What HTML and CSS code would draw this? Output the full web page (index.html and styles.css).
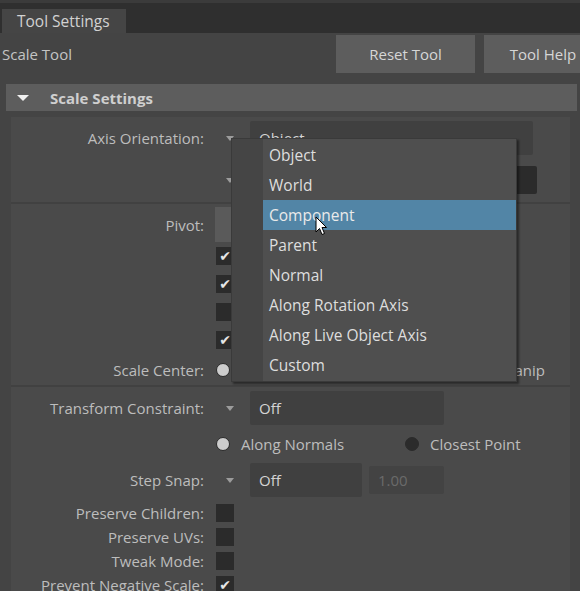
FILE: index.html
```html
<!DOCTYPE html>
<html>
<head>
	<meta charset="UTF-8">
	<title>Tool Settings</title>
	<link rel="stylesheet" href="styles.css">
</head>
<body>
	<div class="tabbar">
		<div class="tab">Tool Settings</div>
	</div>

	<div class="toolbar">
		<span class="tool-name">Scale Tool</span>
		<button class="tool-button">Reset Tool</button>
		<button class="tool-button help-button">Tool Help</button>
	</div>

	<div class="section-head"><span class="head-arrow"></span>Scale Settings</div>

	<div class="section-body">
		<div class="row axis-row">
			<span class="label">Axis Orientation:</span>
			<span class="tri"></span>
			<div class="field axis-field">Object</div>
		</div>
		<div class="row axis-row2">
			<span class="label"></span>
			<span class="tri"></span>
			<div class="field dark-field"></div>
		</div>

		<div class="separator"></div>

		<div class="row pivot-row">
			<span class="label">Pivot:</span>
			<div class="pivot-button"></div>
		</div>
		<div class="row check-row">
			<span class="label"></span>
			<span class="checkbox checked">&#10004;</span>
		</div>
		<div class="row check-row">
			<span class="label"></span>
			<span class="checkbox checked">&#10004;</span>
		</div>
		<div class="row check-row">
			<span class="label"></span>
			<span class="checkbox"></span>
		</div>
		<div class="row check-row">
			<span class="label"></span>
			<span class="checkbox checked">&#10004;</span>
		</div>
		<div class="row center-row">
			<span class="label">Scale Center:</span>
			<span class="radio"></span>
			<span class="radio-text manip">Manip</span>
		</div>

		<div class="separator"></div>

		<div class="row constraint-row">
			<span class="label">Transform Constraint:</span>
			<span class="tri"></span>
			<div class="field off-field">Off</div>
		</div>
		<div class="row radio-row">
			<span class="label"></span>
			<span class="radio"></span>
			<span class="radio-text normals">Along Normals</span>
			<span class="radio dark"></span>
			<span class="radio-text">Closest Point</span>
		</div>
		<div class="row snap-row">
			<span class="label">Step Snap:</span>
			<span class="tri"></span>
			<div class="field snap-field">Off</div>
			<div class="field num-field">1.00</div>
		</div>
		<div class="row small-row first-small">
			<span class="label">Preserve Children:</span>
			<span class="checkbox"></span>
		</div>
		<div class="row small-row">
			<span class="label">Preserve UVs:</span>
			<span class="checkbox"></span>
		</div>
		<div class="row small-row">
			<span class="label">Tweak Mode:</span>
			<span class="checkbox"></span>
		</div>
		<div class="row small-row">
			<span class="label">Prevent Negative Scale:</span>
			<span class="checkbox checked">&#10004;</span>
		</div>
	</div>

	<!-- open option menu for axis orientation -->
	<div class="menu">
		<div class="menu-gutter"></div>
		<ul class="menu-list">
			<li>Object</li>
			<li>World</li>
			<li class="active">Component</li>
			<li>Parent</li>
			<li>Normal</li>
			<li>Along Rotation Axis</li>
			<li>Along Live Object Axis</li>
			<li>Custom</li>
		</ul>
	</div>

	<svg class="cursor" width="13" height="20" viewBox="0 0 13 20">
		<path d="M1 1 L1 16 L4.5 12.5 L7 18.5 L9.5 17.5 L7 11.5 L11.5 11.5 Z" fill="#ffffff" stroke="#000000" stroke-width="1"/>
	</svg>
</body>
</html>
```

FILE: styles.css
```css
body {
	margin: 0;
	width: 580px;
	height: 591px;
	overflow: hidden;
	background-color: #444444;
	font-family: "Open Sans", "Noto Sans", sans-serif;
	font-size: 15px;
	color: #bdbdbd;
	position: relative;
}

.tabbar {
	height: 30px;
	border-top: 3px solid #3b3b3b;
	background-color: #2f2f2f;
	display: flex;
	align-items: flex-end;
}

.tab {
	margin-left: 2px;
	width: 109px;
	height: 24px;
	padding-left: 15px;
	background-color: #454545;
	color: #d2d2d2;
	line-height: 24px;
	font-size: 15.5px;
}

.toolbar {
	height: 47px;
	display: flex;
	align-items: flex-start;
}

.tool-name {
	margin-left: 2px;
	margin-top: 11px;
	color: #c4c4c4;
	flex: 1;
}

.tool-button {
	margin-top: 2px;
	width: 139px;
	height: 38px;
	border: none;
	background-color: #5d5d5d;
	color: #d6d6d6;
	font-family: "Open Sans", "Noto Sans", sans-serif;
	font-size: 15px;
	padding: 0;
	flex: none;
}

.help-button {
	margin-left: 9px;
	width: 118px;
	margin-right: -22px;
}

.section-head {
	margin: 4px 3px 0 6px;
	height: 27px;
	background-color: #5d5d5d;
	display: flex;
	align-items: center;
	font-weight: bold;
	color: #cfcfcf;
}

.head-arrow {
	width: 0;
	height: 0;
	margin-left: 11px;
	margin-right: 21px;
	border-left: 6px solid transparent;
	border-right: 6px solid transparent;
	border-top: 6px solid #f0f0f0;
}

.section-body {
	margin: 6px 10px 0 11px;
	height: 480px;
	background-color: #4a4a4a;
	padding-top: 4px;
}

.row {
	display: flex;
	align-items: center;
}

.label {
	width: 193px;
	flex: none;
	text-align: right;
	white-space: nowrap;
}

.tri {
	width: 0;
	height: 0;
	margin-left: 22px;
	margin-right: 16px;
	border-left: 4px solid transparent;
	border-right: 4px solid transparent;
	border-top: 5px solid #9c9c9c;
}

.field {
	height: 100%;
	box-sizing: border-box;
	padding-left: 9px;
	display: flex;
	align-items: center;
	background-color: #404040;
	border-radius: 2px;
	color: #d4d4d4;
}

.axis-row {
	height: 34px;
}

.axis-field {
	width: 283px;
}

.axis-row2 {
	height: 28px;
	margin-top: 11px;
}

.dark-field {
	width: 287px;
	background-color: #2b2b2b;
}

.separator {
	height: 2px;
	background-color: #414141;
}

.axis-row2 + .separator {
	margin-top: 8px;
}

.pivot-row {
	height: 35px;
	margin-top: 3px;
}

.pivot-button {
	margin-left: 11px;
	width: 280px;
	height: 35px;
	background-color: #5a5a5a;
}

.check-row {
	height: 28px;
}

.checkbox {
	margin-left: 12px;
	width: 18px;
	height: 18px;
	background-color: #2b2b2b;
	color: #e6e6e6;
	font-size: 14px;
	line-height: 18px;
	text-align: center;
	font-family: "DejaVu Sans", sans-serif;
}

.center-row {
	height: 31px;
}

.radio {
	margin-left: 12px;
	width: 12px;
	height: 12px;
	border-radius: 50%;
	background-color: #cdcdcd;
	border: 1px solid #2a2a2a;
	flex: none;
}

.radio.dark {
	background-color: #2b2b2b;
	border-color: #2b2b2b;
	margin-left: 0;
}

.radio-text {
	margin-left: 11px;
}

.manip {
	margin-left: auto;
	margin-right: 25px;
}

.constraint-row {
	height: 34px;
	margin-top: 4px;
}

.off-field {
	width: 194px;
}

.radio-row {
	height: 38px;
}

.normals {
	width: 164px;
}

.snap-row {
	height: 34px;
}

.snap-field {
	width: 112px;
}

.num-field {
	margin-left: 7px;
	width: 75px;
	height: 28px;
	color: #6a6a6a;
	background-color: #434343;
}

.small-row {
	height: 24px;
}

.first-small {
	margin-top: 4px;
}

.menu {
	position: absolute;
	left: 231px;
	top: 138px;
	width: 284px;
	height: 242px;
	display: flex;
	background-color: #4f4f4f;
	border: 1px solid #3a3a3a;
	box-shadow: 2px 2px 2px rgba(0, 0, 0, 0.45);
}

.menu-gutter {
	width: 31px;
	background-color: #454545;
}

.menu-list {
	list-style: none;
	margin: 0;
	padding: 1px 0 0 0;
	flex: 1;
}

.menu-list li {
	height: 30px;
	line-height: 30px;
	padding-left: 6px;
	color: #dedede;
	font-size: 15.5px;
}

.menu-list li.active {
	background-color: #5285a6;
	color: #eaeaea;
}

.cursor {
	position: absolute;
	left: 315px;
	top: 216px;
}
```
